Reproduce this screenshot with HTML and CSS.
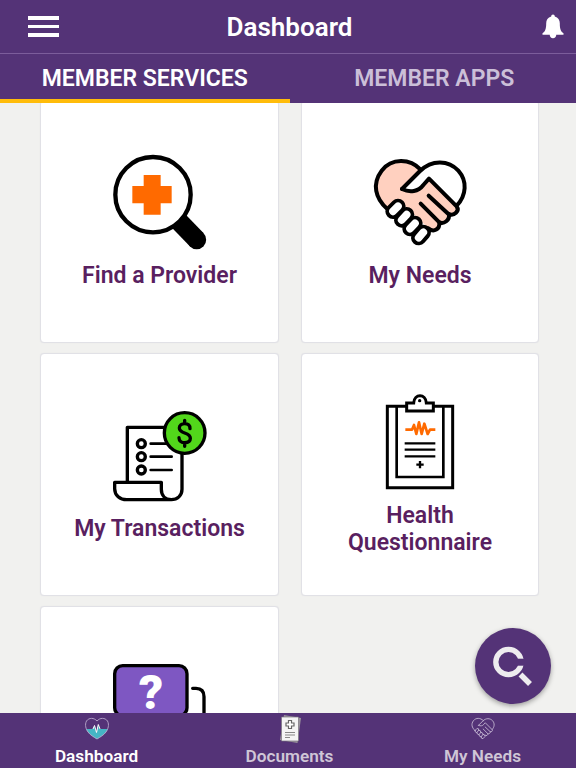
FILE: index.html
```
<!DOCTYPE html>
<html lang="en">
<head>
    <meta charset="UTF-8">
    <title>Dashboard</title>
    <link rel="stylesheet" href="styles.css">
</head>
<body>
<div class="app">
    <header class="topbar">
        <div class="menu"><span></span><span></span><span></span></div>
        <h1>Dashboard</h1>
        <svg class="bell" viewBox="0 0 22 25">
            <path d="M11 0.5c1.100 0 1.800.8 1.800 1.900 3.300.8 5 3.400 5 6.800 0 5.300.8 8.300 3.700 10.100v1.400H.5v-1.400c2.900-1.800 3.700-4.800 3.700-10.100 0-3.400 1.700-6 5-6.800C9.200 1.300 9.900.5 11 .5zM7.700 20.500h6.600c0 2.300-1.400 3.700-3.300 3.700s-3.300-1.400-3.300-3.700z"/>
        </svg>
    </header>

    <div class="tabs">
        <div class="tab active">MEMBER SERVICES</div>
        <div class="tab">MEMBER APPS</div>
    </div>

    <main class="content">
        <div class="cards">
            <div class="card">
                <svg class="card-icon" viewBox="36 27 288 288">
                    <path d="M234 226L290 284" stroke="#000" stroke-width="57"/>
                    <circle cx="290" cy="284" r="28.500"/>
                    <circle cx="159" cy="149" r="113" fill="#fff" stroke="#000" stroke-width="13"/>
                    <path d="M131 90h51v33h33v52h-33v34h-51v-34H97v-52h34z" fill="#ff6a00"/>
                </svg>
                <p>Find a Provider</p>
            </div>

            <div class="card">
                <svg class="card-icon line" viewBox="36 25 288 288" stroke-width="12">
                    <path class="skin" stroke="none" d="M182 72C150 38 95 36 65 75C35 115 46 158 82 190L120 165L205 248C222 262 240 250 238 230C252 236 270 224 267 205C282 212 300 196 290 182L207 99L190 118C175 138 150 142 126 130Z"/>
                    <path d="M182 72C150 38 95 36 65 75C35 115 46 158 82 190"/>
                    <path d="M126 130L180 76C215 42 265 42 295 75C322 106 320 148 290 180"/>
                    <path d="M126 130C150 142 175 138 190 118L207 99L290 182C300 196 282 212 267 205C270 224 252 236 238 230C240 250 222 262 205 248"/>
                    <path d="M206 150L266 206M182 174L238 230"/>
                    <!-- knuckles -->
                    <g class="knuckle-out"><path d="M99 197L114 182M125 223L140 207M150 249L165 233M176 276L190 260"/></g>
                    <g class="knuckle-in"><path d="M99 197L114 182M125 223L140 207M150 249L165 233M176 276L190 260"/></g>
                </svg>
                <p>My Needs</p>
            </div>

            <div class="card">
                <svg class="card-icon line" viewBox="36 21 288 288" stroke-width="10">
                    <path d="M82 245V82H200M246 150V268C246 287 232 299 214 299C196 299 184 287 184 268V247H44V266C44 286 60 299 80 299H214"/>
                    <circle cx="124" cy="131" r="12"/>
                    <circle cx="124" cy="170" r="12"/>
                    <circle cx="124" cy="210" r="12"/>
                    <path d="M152 131H205M152 170H215M152 210H215" stroke-width="8"/>
                    <circle cx="254" cy="99" r="61" fill="#52d71b"/>
                    <path d="M270 86C270 75 263 71 254 71C245 71 238 76 238 84C238 93 245 96 254 99C263 102 271 106 271 115C271 124 263 128 254 128C245 128 237 123 237 113M254 61V71M254 128V139"/>
                </svg>
                <p>My Transactions</p>
            </div>

            <div class="card">
                <svg class="card-icon board" viewBox="6 27 288 288" stroke-width="9">
                    <path d="M52 64H248V308H52Z"/>
                    <path d="M80 64V276H220V64" stroke-width="8"/>
                    <path d="M110 54H131C133 25 167 25 169 54H190V78H110Z" fill="#fff"/>
                    <circle cx="149" cy="47" r="5" fill="#000" stroke="none"/>
                    <path d="M106 134H126L132 120L139 147L147 112L155 147L163 116L173 147L180 134H196" stroke="#ff6a00" stroke-width="8" stroke-linejoin="round"/>
                    <path d="M104 175H196M104 194H196M104 214H196M139 239H161M150 228V250" stroke-width="7"/>
                </svg>
                <p>Health<br>Questionnaire</p>
            </div>

            <div class="card">
                <svg class="card-icon line" viewBox="246 180 288 288" stroke-width="10">
                    <rect x="254" y="197" width="217" height="150" rx="24" fill="#7e57c2"/>
                    <text x="363" y="326" text-anchor="middle">?</text>
                    <path d="M488 265H498Q522 265 522 290V400"/>
                </svg>
                <p></p>
            </div>
        </div>
    </main>

    <nav class="bottom-nav">
        <div class="nav-item active">
            <svg viewBox="0 0 24 24">
                <path d="M1 12H7.500L9.500 9L11.500 16L13 8L14.500 12H23C21 16 16 20 12 22C8 20 3 16 1 12Z" fill="#45b5c4"/>
                <path d="M12 4C9 .5 4 .5 1.500 4C-.5 8 1 12 3 15C5 18 9 20 12 22C15 20 19 18 21 15C23 12 24.500 8 22.500 4C20 .5 15 .5 12 4Z" fill="none" stroke="#b9a9cd" stroke-width=".9"/>
                <path d="M8 12L9.500 8.500L11.500 15.500L13.300 7.500L15 12" fill="none" stroke="#fff" stroke-width="1"/>
            </svg>
            <span>Dashboard</span>
        </div>
        <div class="nav-item">
            <svg class="docs" viewBox="0 0 24 28">
                <path d="M6 0L23 3L19.500 28L2 25Z" fill="#9a949d"/>
                <path d="M3.500 2H20.500V26H3.500Z" fill="#f4f4f4" stroke="#77717b" stroke-width=".7"/>
                <path d="M10.500 5.500h3v2.500h2.500v3h-2.500v2.500h-3V11H8V8h2.500z" fill="#fff" stroke="#666" stroke-width="1.200"/>
                <path d="M7 17.500H17M7 20H17M7 22.500H12" stroke="#888" stroke-width="1"/>
            </svg>
            <span>Documents</span>
        </div>
        <div class="nav-item">
            <svg viewBox="36 30 288 288" fill="none" stroke="#cbbfd8" stroke-width="10" stroke-linecap="round" stroke-linejoin="round">
                <path d="M182 72C150 38 95 36 65 75C35 115 46 158 82 190M126 130L180 76C215 42 265 42 295 75C322 106 320 148 290 180"/>
                <path d="M126 130C150 142 175 138 190 118L207 99L290 182C300 196 282 212 267 205C270 224 252 236 238 230C240 250 222 262 205 248M206 150L266 206M182 174L238 230"/>
                <path d="M84 192L110 166Q130 164 128 188Q156 190 154 214Q180 216 180 238Q206 240 204 264L180 290Q158 292 158 268Q132 266 132 242Q108 240 106 218Q80 214 84 192ZM106 218L128 188M132 242L154 214M158 268L180 238"/>
            </svg>
            <span>My Needs</span>
        </div>
    </nav>

    <div class="fab">
        <svg viewBox="0 0 76 76">
            <circle cx="33.500" cy="34" r="12.700" fill="none" stroke="#eeecef" stroke-width="5.300"/>
            <path d="M38 30.700H50V37.700H38Z" fill="#543377"/>
            <path d="M45.500 46.500L55 56" stroke="#eeecef" stroke-width="5.500"/>
        </svg>
    </div>
</div>
</body>
</html>
```
FILE: styles.css
```
* {
    box-sizing: border-box;
}

body {
    margin: 0;
    overflow: hidden;
    font-family: Roboto, "Liberation Sans", sans-serif;
    font-weight: 600;
    background: #f1f1ef;
}

.app {
    position: relative;
    display: flex;
    flex-direction: column;
    width: 579px;
    height: 768px;
}

/* Header */
.topbar {
    display: grid;
    grid-template-columns: 1fr auto 1fr;
    align-items: center;
    height: 54px;
    padding: 0 15px 0 28px;
    background: #543377;
    border-bottom: 1px solid #7c5d9b;
}

.menu {
    display: flex;
    flex-direction: column;
    gap: 5px;
    width: 31px;
}

.menu span {
    height: 3.5px;
    background: #fff;
}

h1 {
    margin: 0;
    padding-right: 13px;
    font-size: 26px;
    font-weight: 600;
    color: #fff;
}

.bell {
    width: 22px;
    height: 25px;
    justify-self: end;
    fill: #fff;
}

.tabs {
    display: flex;
    height: 49px;
    background: #543377;
}

.tab {
    flex: 1;
    text-align: center;
    line-height: 50px;
    font-size: 23px;
    color: #cbbfd8;
}

.tab.active {
    color: #fff;
    border-bottom: 4px solid #ffbc0a;
}

/* Cards */
.content {
    flex: 1;
    min-height: 0;
    overflow: hidden;
}

.cards {
    display: grid;
    grid-template-columns: 239px 238px;
    grid-auto-rows: 243px;
    gap: 10px 22px;
    justify-content: center;
    margin-top: -3px;
}

.card {
    display: flex;
    flex-direction: column;
    align-items: center;
    justify-content: center;
    gap: 12px;
    background: #fff;
    border: 1px solid #e1e1e6;
    border-radius: 4px;
    box-shadow: 0 0 1px #dcdce2;
}

.card p {
    margin: 0;
    min-height: 27px;
    text-align: center;
    font-size: 23px;
    line-height: 27px;
    color: #591f60;
}

.card-icon {
    width: 96px;
    height: 96px;
}

.line, .board {
    fill: none;
    stroke: #000;
}

.line {
    stroke-linecap: round;
    stroke-linejoin: round;
}

.line text {
    font-size: 144px;
    font-weight: 900;
    fill: #fff;
    stroke: none;
}

.skin {
    fill: #ffd0bf;
}

.knuckle-out {
    stroke-width: 46;
}

.knuckle-in {
    stroke: #fff;
    stroke-width: 23;
}

/* Bottom navigation */
.bottom-nav {
    display: flex;
    height: 55px;
    background: #543377;
}

.nav-item {
    flex: 1;
    display: flex;
    flex-direction: column;
    align-items: center;
    padding-top: 4px;
    font-size: 17.2px;
    line-height: 22px;
    color: #cfc6d6;
}

.nav-item.active {
    color: #fff;
}

.nav-item svg {
    width: 24px;
    height: 24px;
    margin-bottom: 4px;
}

.nav-item .docs {
    height: 28px;
    margin: -2px 0 2px;
}

/* Floating search button */
.fab {
    position: absolute;
    left: 475px;
    top: 628px;
    width: 76px;
    height: 76px;
    border-radius: 50%;
    background: #543377;
    box-shadow: 0 2px 5px rgba(0, 0, 0, 0.35);
}
```
